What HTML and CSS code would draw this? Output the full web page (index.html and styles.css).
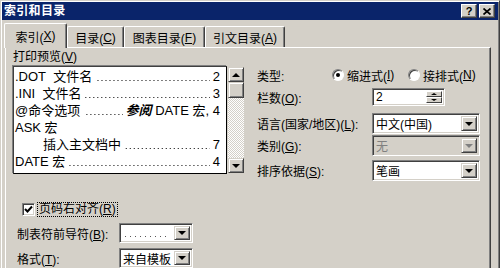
FILE: index.html
```html
<!DOCTYPE html>
<html lang="zh-CN">
<head>
<meta charset="utf-8">
<title>索引和目录</title>
<link rel="stylesheet" href="styles.css">
</head>
<body>
<div class="dialog">
  <div class="titlebar">
    <span class="title">索引和目录</span>
    <div class="tb-btns">
      <span class="tbtn help">?</span>
      <span class="tbtn close"><svg width="8" height="7" viewBox="0 0 8 7"><path d="M0.5 0.5 L7.5 6.5 M7.5 0.5 L0.5 6.5" stroke="#000" stroke-width="1.7" fill="none"/></svg></span>
    </div>
  </div>
  <div class="tabs">
    <div class="tab active t1">索引(<u>X</u>)</div>
    <div class="tab t2">目录(<u>C</u>)</div>
    <div class="tab t3">图表目录(<u>F</u>)</div>
    <div class="tab t4">引文目录(<u>A</u>)</div>
  </div>
  <div class="panel">
    <div class="cols">
      <div class="left">
        <div class="label">打印预览(<u>V</u>)</div>
        <div class="preview-wrap">
          <div class="preview">
            <div class="entry"><span class="term">.DOT&nbsp; 文件名</span><span class="leader"></span><span class="pg">2</span></div>
            <div class="entry"><span class="term">.INI&nbsp; 文件名</span><span class="leader"></span><span class="pg">3</span></div>
            <div class="entry"><span class="term">@命令选项</span><span class="leader"></span><span class="pg"><i class="see">参阅</i> DATE 宏, 4</span></div>
            <div class="entry"><span class="term">ASK 宏</span></div>
            <div class="entry sub"><span class="term">插入主文档中</span><span class="leader"></span><span class="pg">7</span></div>
            <div class="entry"><span class="term">DATE 宏</span><span class="leader"></span><span class="pg">4</span></div>
          </div>
          <div class="vscroll">
            <div class="sbtn"><span class="tri-up"></span></div>
            <div class="thumb"></div>
            <div class="track"></div>
            <div class="sbtn"><span class="tri-down"></span></div>
          </div>
        </div>
      </div>
      <div class="right">
        <div class="frow type-row">
          <span class="flabel type-label">类型:</span>
          <span class="radio r1"><span class="rdot checked"></span>缩进式(<u>I</u>)</span>
          <span class="radio"><span class="rdot"></span>接排式(<u>N</u>)</span>
        </div>
        <div class="frow cols-row">
          <span class="flabel">栏数(<u>O</u>):</span>
          <span class="spin"><span class="spin-val">2</span><span class="spin-btns"><span class="sp-btn"><span class="tri-up small"></span></span><span class="sp-btn"><span class="tri-down small"></span></span></span></span>
        </div>
        <div class="frow lang-row">
          <span class="flabel">语言(国家/地区)(<u>L</u>):</span>
          <span class="combo wide"><span class="combo-val">中文(中国)</span><span class="dd-btn"><span class="tri-down"></span></span></span>
        </div>
        <div class="frow cat-row">
          <span class="flabel">类别(<u>G</u>):</span>
          <span class="combo wide disabled"><span class="combo-val">无</span><span class="dd-btn"><span class="tri-down"></span></span></span>
        </div>
        <div class="frow sort-row">
          <span class="flabel">排序依据(<u>S</u>):</span>
          <span class="combo wide"><span class="combo-val">笔画</span><span class="dd-btn"><span class="tri-down"></span></span></span>
        </div>
      </div>
    </div>
    <div class="check-row">
      <span class="checkbox"><svg width="9" height="9" viewBox="0 0 9 9"><path d="M1 4 L3.5 6.5 L8 1.5" stroke="#000" stroke-width="2" fill="none"/></svg></span>
      <span class="check-text">页码右对齐(<u>R</u>)</span>
    </div>
    <div class="brow leader-row">
      <span class="blabel">制表符前导符(<u>B</u>):</span>
      <span class="combo narrow"><span class="combo-val"><span class="dots"></span></span><span class="dd-btn"><span class="tri-down"></span></span></span>
    </div>
    <div class="brow format-row">
      <span class="blabel">格式(<u>T</u>):</span>
      <span class="combo narrow"><span class="combo-val">来自模板</span><span class="dd-btn"><span class="tri-down"></span></span></span>
    </div>
  </div>
</div>
</body>
</html>
```

FILE: styles.css
```css
html, body {
  margin: 0;
  padding: 0;
}
body {
  width: 500px;
  height: 268px;
  overflow: hidden;
  background: #d4d0c8;
  font-family: "Liberation Sans", "Noto Sans CJK SC", sans-serif;
  font-size: 12px;
  color: #000;
}
u {
  text-decoration: underline;
  text-underline-offset: 1px;
}

.dialog {
  width: 500px;
  height: 320px;
  box-sizing: border-box;
  background: #d4d0c8;
  border: 1px solid;
  border-color: #d4d0c8 #404040 #404040 #d4d0c8;
  box-shadow: inset 1px 1px #fff, inset -1px -1px #808080;
  padding: 1px 1px 0 1px;
}

/* title bar */
.titlebar {
  height: 18px;
  background: #0a246a;
  display: flex;
  align-items: center;
  justify-content: space-between;
  padding: 0 3px 0 2px;
}
.title {
  color: #fff;
  font-weight: bold;
  font-size: 12px;
  line-height: 14px;
  letter-spacing: 0.3px;
}
.tb-btns {
  display: flex;
  gap: 2px;
}
.tbtn {
  width: 16px;
  height: 14px;
  box-sizing: border-box;
  background: #d4d0c8;
  border: 1px solid;
  border-color: #fff #404040 #404040 #fff;
  box-shadow: inset -1px -1px #808080;
  display: flex;
  align-items: center;
  justify-content: center;
  font-family: "Liberation Sans", sans-serif;
  font-weight: bold;
  font-size: 11px;
  line-height: 12px;
}

/* tabs */
.tabs {
  height: 27px;
  display: flex;
  align-items: flex-end;
  padding-left: 2px;
  position: relative;
  z-index: 1;
}
.tab {
  height: 21px;
  box-sizing: border-box;
  display: flex;
  align-items: center;
  justify-content: center;
  border-top: 1px solid #fff;
  border-left: 1px solid #fff;
  border-right: 1px solid #404040;
  box-shadow: inset -1px 0 #808080;
  border-radius: 2px 2px 0 0;
  background: #d4d0c8;
  padding-top: 1px;
}
.tab.active {
  height: 25px;
  margin-bottom: -1px;
  padding-bottom: 1px;
}
.t1 { width: 63px; }
.t2 { width: 57px; }
.t3 { width: 81px; }
.t4 { width: 80px; }

/* panel */
.panel {
  margin-left: 3px;
  width: 486px;
  height: 290px;
  box-sizing: border-box;
  border: 1px solid;
  border-color: #fff #404040 #404040 #fff;
  box-shadow: inset -1px -1px #808080;
  padding: 2px 0 0 7px;
}
.cols {
  display: flex;
  align-items: flex-start;
}
.left {
  width: 231px;
}
.label {
  height: 14px;
  line-height: 14px;
}
.preview-wrap {
  margin-top: 2px;
  display: flex;
  height: 108px;
}
.preview {
  width: 214px;
  height: 108px;
  box-sizing: border-box;
  background: #fff;
  border: 1px solid;
  border-color: #404040 #000 #000 #404040;
  box-shadow: -1px -1px 0 #808080;
  padding: 1px 6px 0 1px;
  font-size: 13px;
  overflow: hidden;
}
.entry {
  height: 17px;
  display: flex;
  align-items: center;
  white-space: nowrap;
  line-height: 17px;
}
.entry.sub {
  padding-left: 28px;
}
.term {
  flex: none;
}
.leader {
  flex: 1;
  align-self: stretch;
  margin: 0 3px 0 4px;
  background-image: linear-gradient(to right, #000 1px, transparent 1px);
  background-size: 4px 1px;
  background-repeat: repeat-x;
  background-position: right 0 bottom 4px;
}
.pg {
  flex: none;
}
.see {
  font-style: italic;
  font-weight: bold;
}
.vscroll {
  width: 16px;
  margin-left: 1px;
  display: flex;
  flex-direction: column;
  height: 108px;
  padding: 1px 0;
  box-sizing: border-box;
}
.sbtn, .thumb {
  height: 15px;
  flex: none;
  box-sizing: border-box;
  background: #d4d0c8;
  border: 1px solid;
  border-color: #d4d0c8 #404040 #404040 #d4d0c8;
  box-shadow: inset 1px 1px #fff, inset -1px -1px #808080;
  display: flex;
  align-items: center;
  justify-content: center;
}
.thumb {
  height: 16px;
}
.track {
  flex: 1;
  background: repeating-conic-gradient(#fff 0 25%, #d4d0c8 0 50%) 0 0 / 2px 2px;
}
.tri-up, .tri-down {
  width: 0;
  height: 0;
  border-left: 4px solid transparent;
  border-right: 4px solid transparent;
}
.tri-up { border-bottom: 4px solid #000; }
.tri-down { border-top: 4px solid #000; }
.tri-up.small, .tri-down.small {
  border-left-width: 3px;
  border-right-width: 3px;
}
.tri-up.small { border-bottom-width: 2px; }
.tri-down.small { border-top-width: 2px; }

/* right column */
.right {
  margin-left: 13px;
  padding-top: 14px;
  width: 223px;
}
.frow {
  display: flex;
  align-items: center;
  white-space: nowrap;
}
.flabel {
  width: 115px;
  flex: none;
}
.type-row { height: 22px; }
.type-label { width: 75px; }
.radio {
  display: flex;
  align-items: center;
}
.radio.r1 { width: 76px; }
.rdot {
  width: 12px;
  height: 12px;
  box-sizing: border-box;
  border-radius: 50%;
  background: #fff;
  border: 1px solid;
  border-color: #808080 #fff #fff #808080;
  box-shadow: inset 1px 1px #404040;
  margin-right: 3px;
  display: flex;
  align-items: center;
  justify-content: center;
}
.rdot.checked::after {
  content: "";
  width: 4px;
  height: 4px;
  border-radius: 50%;
  background: #000;
}
.cols-row { margin-top: 2px; height: 18px; }
.lang-row { margin-top: 7px; height: 21px; }
.cat-row { margin-top: 1px; height: 21px; }
.sort-row { margin-top: 4px; height: 21px; }

.spin, .combo {
  display: flex;
  align-items: stretch;
  box-sizing: border-box;
  background: #fff;
  border: 1px solid;
  border-color: #808080 #fff #fff #808080;
  box-shadow: inset 1px 1px #404040, inset -1px -1px #d4d0c8;
  padding: 2px;
}
.spin {
  width: 73px;
  height: 18px;
}
.spin-val, .combo-val {
  flex: 1;
  display: flex;
  align-items: center;
  padding-left: 1px;
}
.spin-btns {
  width: 16px;
  display: flex;
  flex-direction: column;
}
.sp-btn {
  flex: 1;
  background: #d4d0c8;
  border: 1px solid;
  border-color: #fff #404040 #404040 #fff;
  display: flex;
  align-items: center;
  justify-content: center;
}
.combo {
  height: 21px;
}
.combo.wide { width: 108px; }
.combo.narrow { width: 74px; height: 20px; }
.combo.disabled {
  background: #d4d0c8;
  color: #808080;
}
.combo.disabled .tri-down {
  border-top-color: #808080;
}
.dd-btn {
  width: 16px;
  flex: none;
  box-sizing: border-box;
  background: #d4d0c8;
  border: 1px solid;
  border-color: #d4d0c8 #404040 #404040 #d4d0c8;
  box-shadow: inset 1px 1px #fff, inset -1px -1px #808080;
  display: flex;
  align-items: center;
  justify-content: center;
}
.dots {
  width: 44px;
  height: 1px;
  margin-top: 6px;
  margin-left: 2px;
  background-image: linear-gradient(to right, #555 1px, transparent 1px);
  background-size: 5px 1px;
  background-repeat: repeat-x;
}

/* bottom-left */
.check-row {
  margin-top: 20px;
  margin-left: 9px;
  height: 16px;
  display: flex;
  align-items: center;
}
.checkbox {
  width: 13px;
  height: 13px;
  box-sizing: border-box;
  background: #fff;
  border: 1px solid;
  border-color: #808080 #fff #fff #808080;
  box-shadow: inset 1px 1px #404040, inset -1px -1px #d4d0c8;
  display: flex;
  align-items: center;
  justify-content: center;
}
.check-text {
  margin-left: 2px;
  border: 1px dotted #000;
  padding: 0 1px;
  line-height: 13px;
}
.brow {
  display: flex;
  align-items: center;
  margin-left: 4px;
  white-space: nowrap;
}
.blabel {
  width: 102px;
  flex: none;
}
.leader-row { margin-top: 6px; }
.format-row { margin-top: 5px; }
```
